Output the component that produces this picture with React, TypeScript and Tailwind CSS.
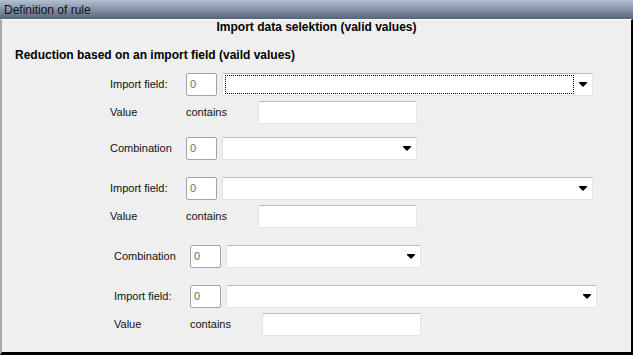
import React from "react";

const font = { fontFamily: '"Liberation Sans", Arial, sans-serif' };

function Arrow() {
  return (
    <svg width="8" height="5" viewBox="0 0 8 5" className="shrink-0">
      <path d="M0 0h8v1l-4 4l-4-4z" fill="#000" />
    </svg>
  );
}

function NumBox() {
  return (
    <div className="w-[31px] h-[23px] bg-white border border-[#a3a3a3] rounded-[2px] flex items-center pl-[3px] text-[11px] text-[#6d6d6d]">
      0
    </div>
  );
}

function Dropdown({ width, focus }: { width: string; focus?: boolean }) {
  return (
    <div
      className={`${width} h-[23px] bg-white border border-[#e3e3e3] border-t-[#b9b9b9] rounded-[2px] flex items-center pr-[5px]`}
    >
      <div className="flex-1 h-full p-[1px] pl-[2px] pr-[5px]">
        {focus && <div className="w-full h-full border border-dotted border-black" />}
      </div>
      <Arrow />
    </div>
  );
}

function TextBox() {
  return (
    <div className="w-[159px] h-[23px] bg-white border border-[#e3e3e3] border-t-[#b9b9b9] rounded-[2px]" />
  );
}

function ImportRow({ focus, mt }: { focus?: boolean; mt: string }) {
  return (
    <>
      <div className={`flex items-center ${mt}`}>
        <span className="w-[76px] text-[11px] text-[#111]">Import field:</span>
        <NumBox />
        <div className="ml-[5px]">
          <Dropdown width="w-[371px]" focus={focus} />
        </div>
      </div>
      <div className="flex items-center mt-[5px]">
        <span className="w-[76px] text-[11px] text-[#111]">Value</span>
        <span className="w-[72px] text-[11px] text-[#111]">contains</span>
        <TextBox />
      </div>
    </>
  );
}

function CombinationRow({ mt }: { mt: string }) {
  return (
    <div className={`flex items-center ${mt}`}>
      <span className="w-[76px] text-[11px] text-[#111]">Combination</span>
      <NumBox />
      <div className="ml-[5px]">
        <Dropdown width="w-[195px]" />
      </div>
    </div>
  );
}

export default function App() {
  return (
    <div className="w-[633px] h-[355px] flex flex-col bg-[#efefef] overflow-hidden" style={font}>
      {/* TITLE BAR */}
      <div className="h-[19px] shrink-0 bg-gradient-to-b from-[#b3c0d2] via-[#8593a8] to-[#56647a] flex items-center pl-[4px] text-[12px] text-[#111]">
        Definition of rule
      </div>

      {/* BODY */}
      <div className="flex-1 flex flex-col border-t border-t-white border-l-2 border-l-[#a9a9a9] border-r-2 border-r-black border-b-[3px] border-b-black">
        <div className="h-[14px] leading-[14px] text-center text-[12px] font-bold text-black">
          Import data selektion (valid values)
        </div>
        <div className="mt-[14px] ml-[13px] h-[14px] leading-[14px] text-[12px] font-bold text-black">
          Reduction based on an import field (vaild values)
        </div>

        <div className="ml-[108px] flex flex-col">
          <ImportRow focus mt="mt-[11px]" />
          <CombinationRow mt="mt-[13px]" />
          <ImportRow mt="mt-[17px]" />
        </div>
        <div className="ml-[112px] flex flex-col">
          <CombinationRow mt="mt-[17px]" />
          <ImportRow mt="mt-[17px]" />
        </div>
      </div>
    </div>
  );
}
